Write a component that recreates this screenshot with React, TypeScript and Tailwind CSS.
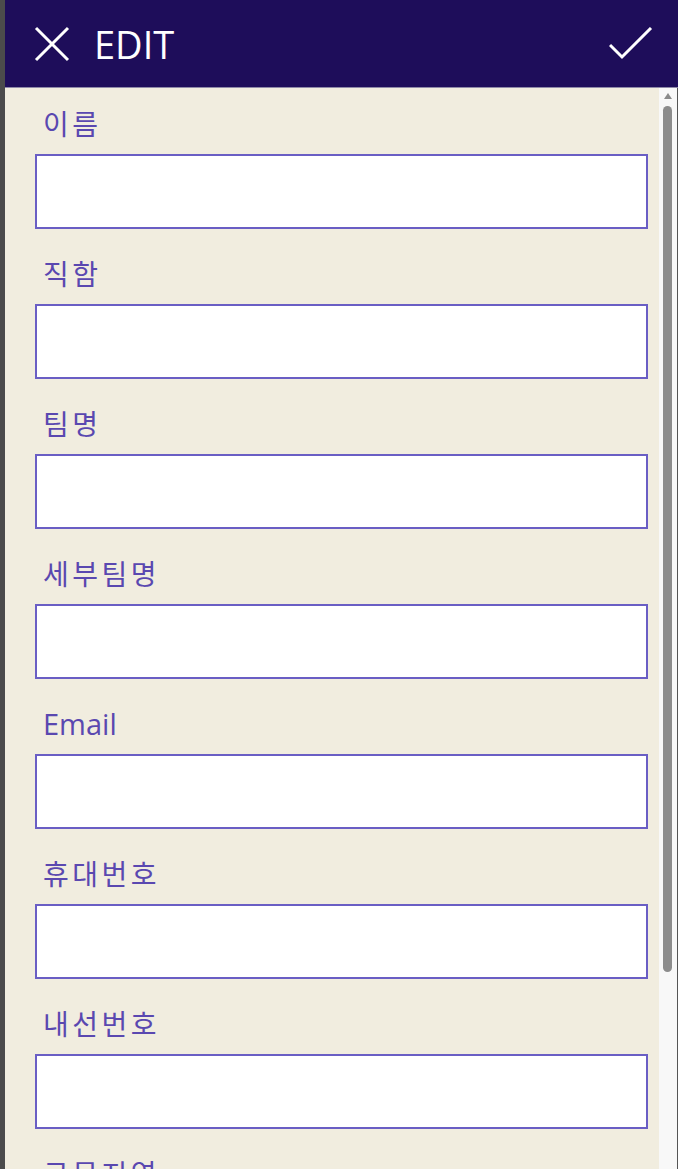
import React from "react";

const labels = ["이름", "직함", "팀명", "세부팀명", "Email", "휴대번호", "내선번호", "근무지역"];

export default function App() {
  const font = { fontFamily: '"Segoe UI", "Open Sans", "Noto Sans CJK KR", sans-serif' };
  return (
    <div className="flex h-[1169px] w-[678px] overflow-hidden bg-[#4b4b4b]" style={font}>
      <div className="w-[5px] shrink-0 bg-[#4b4b4b]" />
      <div className="flex min-w-0 flex-1 flex-col">
        <div className="flex h-[88px] shrink-0 items-center border-b border-[#8f8aa8] bg-[#1e0d5a] pl-[30px] pr-[25px]">
          <svg width="36" height="36" viewBox="0 0 36 36" className="shrink-0 -ml-[1px]">
            <path d="M2 2 L34 34 M34 2 L2 34" stroke="white" strokeWidth="3" />
          </svg>
          <div className="ml-[24px] text-[38px] leading-none text-white">EDIT</div>
          <div className="flex-1" />
          <svg width="44" height="34" viewBox="0 0 44 34" className="shrink-0">
            <path d="M1 18 L13 30 L42 1" stroke="white" strokeWidth="3" fill="none" />
          </svg>
        </div>
        <div className="flex min-h-0 flex-1">
          <div className="min-w-0 flex-1 bg-[#f1eddf] pl-[30px] pr-[11px]">
            {labels.map((l) => (
              <div key={l} className="flex flex-col">
                <div
                  className={
                    l === "Email"
                      ? "h-[66px] pl-[8px] pt-[17px] text-[29px] leading-[38px] text-[#5a48b0]"
                      : "h-[66px] pl-[8px] pt-[17px] text-[28px] leading-[38px] tracking-[3.5px] text-[#5a48b0]"
                  }
                >
                  {l}
                </div>
                <div className="h-[75px] border-2 border-[#6a5ec4] bg-white" />
                <div className="h-[9px]" />
              </div>
            ))}
          </div>
          <div className="relative w-[19px] shrink-0 border-r border-[#555] bg-[#f8f8f8]">
            <svg width="10" height="8" viewBox="0 0 10 8" className="absolute left-[4px] top-[4px]">
              <path d="M5 1 L9 7 L1 7 Z" fill="#8a8a8a" />
            </svg>
            <div className="absolute left-[4px] top-[18px] h-[866px] w-[9px] rounded-full bg-[#8c8c8c]" />
          </div>
        </div>
      </div>
    </div>
  );
}
